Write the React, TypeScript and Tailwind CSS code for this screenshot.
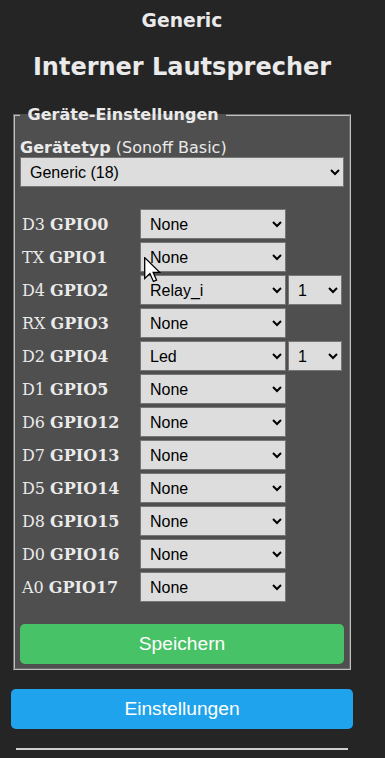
import React from "react";

type Row = [string, string, string, string | null];

const rows: Row[] = [
  ["D3", "GPIO0", "None", null],
  ["TX", "GPIO1", "None", null],
  ["D4", "GPIO2", "Relay_i", "1"],
  ["RX", "GPIO3", "None", null],
  ["D2", "GPIO4", "Led", "1"],
  ["D1", "GPIO5", "None", null],
  ["D6", "GPIO12", "None", null],
  ["D7", "GPIO13", "None", null],
  ["D5", "GPIO14", "None", null],
  ["D8", "GPIO15", "None", null],
  ["D0", "GPIO16", "None", null],
  ["A0", "GPIO17", "None", null],
];

const selCls =
  "h-[30px] bg-[#dddddd] border border-[#767676] px-[5px] text-[16px] leading-[18px] text-black font-['Liberation_Sans',Arial,sans-serif]";

export default function App() {
  return (
    <div className="relative min-h-screen bg-[#252525] pl-[11px] text-[#eaeaea] font-['DejaVu_Sans',Verdana,sans-serif] overflow-hidden">
      <div className="w-[342px]">
        <h3 className="pt-[10px] text-center text-[18.72px] leading-[22px] font-bold">Generic</h3>
        <h2 className="mt-[21px] text-center text-[24px] leading-[28px] font-bold">Interner Lautsprecher</h2>

        <fieldset className="mt-[24px] mx-[2px] border-2 [border-style:groove] border-[#c0c0c0] bg-[#4f4f4f] px-[5px] pb-[4px]">
          <legend className="px-[2px] text-[16px] leading-[19px] font-bold">&nbsp;Geräte-Einstellungen&nbsp;</legend>
          <div className="mt-[14px] text-[16px] leading-[19px]">
            <b>Gerätetyp</b> (Sonoff Basic)
          </div>
          <select className={`${selCls} w-full block`} defaultValue="g">
            <option value="g">Generic (18)</option>
          </select>

          <div className="mt-[22px] flex flex-col gap-[3px]">
            {rows.map(([d, g, v, n]) => (
              <div key={g} className="flex items-center h-[30px]">
                <div className="w-[120px] pl-[2px] text-[16px] leading-[19px] font-['DejaVu_Serif',serif] whitespace-nowrap">
                  {d} <b>{g}</b>
                </div>
                <select className={`${selCls} w-[146px]`} defaultValue={v}>
                  <option value={v}>{v}</option>
                </select>
                {n && (
                  <select className={`${selCls} w-[54px] ml-[2px]`} defaultValue={n}>
                    <option value={n}>{n}</option>
                  </select>
                )}
              </div>
            ))}
          </div>

          <button className="mt-[22px] block w-full h-[40px] rounded-[4.8px] bg-[#47c266] text-white text-[19.2px] font-['Liberation_Sans',Arial,sans-serif]">
            Speichern
          </button>
        </fieldset>

        <button className="mt-[19px] block w-full h-[40px] rounded-[4.8px] bg-[#1fa3ec] text-white text-[19.2px] font-['Liberation_Sans',Arial,sans-serif]">
          Einstellungen
        </button>

        <div className="mt-[19px] mx-[5px] h-[2px] bg-[#cfcfcf]" />
        <div className="mt-[9px] text-right text-[11px] leading-[13px] text-[#aaaaaa]">
          Tasmota 9.1.0 von Theo Arends
        </div>
      </div>

      <svg
        className="absolute left-[144px] top-[257px]"
        width="17"
        height="26"
        viewBox="0 0 13 20"
      >
        <path
          d="M0.5 0.5 L0.5 16.5 L4.5 12.7 L7.2 18.8 L9.6 17.8 L7 11.8 L12 11.8 Z"
          fill="white"
          stroke="black"
          strokeWidth="1"
          strokeLinejoin="miter"
        />
      </svg>
    </div>
  );
}
